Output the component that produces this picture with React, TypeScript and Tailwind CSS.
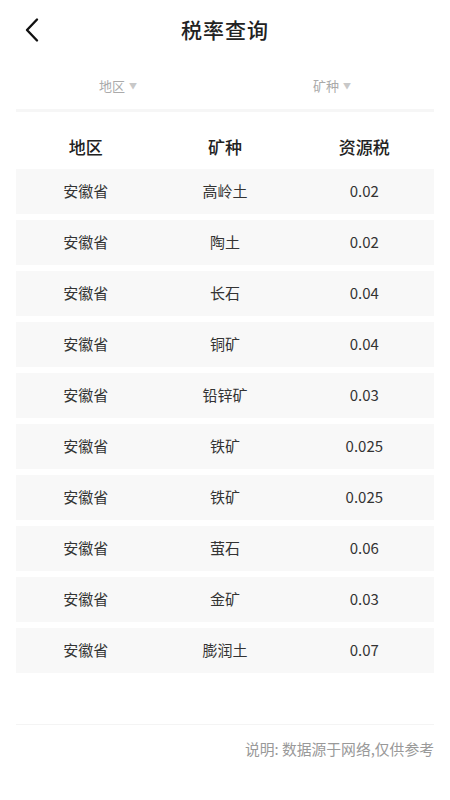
const rows = [
  { region: "安徽省", mineral: "高岭土", tax: "0.02" },
  { region: "安徽省", mineral: "陶土", tax: "0.02" },
  { region: "安徽省", mineral: "长石", tax: "0.04" },
  { region: "安徽省", mineral: "铜矿", tax: "0.04" },
  { region: "安徽省", mineral: "铅锌矿", tax: "0.03" },
  { region: "安徽省", mineral: "铁矿", tax: "0.025" },
  { region: "安徽省", mineral: "铁矿", tax: "0.025" },
  { region: "安徽省", mineral: "萤石", tax: "0.06" },
  { region: "安徽省", mineral: "金矿", tax: "0.03" },
  { region: "安徽省", mineral: "膨润土", tax: "0.07" },
];

const font = { fontFamily: '"Noto Sans CJK SC", "Noto Sans", sans-serif' };

export default function App() {
  return (
    <div className="w-[450px] h-[800px] bg-white text-[#222]" style={font}>
      {/* Top bar */}
      <div className="relative h-[60px] flex items-center justify-center">
        <button className="absolute left-[22px] top-[16px]">
          <svg width="20" height="28" viewBox="0 0 20 28" fill="none">
            <polyline
              points="15,3.5 5,14 15,24.5"
              stroke="#111"
              strokeWidth="2.4"
              strokeLinecap="round"
              strokeLinejoin="round"
            />
          </svg>
        </button>
        <h1 className="text-[21px] font-medium text-[#222] tracking-[1px]">税率查询</h1>
      </div>

      {/* Filters */}
      <div className="mx-4 h-[49px] pt-[2px] flex items-center text-[13px] text-[#aaa]">
        <div className="flex-1 flex items-center justify-center gap-[4px] pr-[10px]">
          <span>地区</span>
          <span className="text-[8px] text-[#c8c8c8]">▼</span>
        </div>
        <div className="flex-1 flex items-center justify-center gap-[4px]">
          <span>矿种</span>
          <span className="text-[8px] text-[#c8c8c8]">▼</span>
        </div>
      </div>
      <div className="mx-4 h-[3px] bg-[#f6f6f6]" />

      {/* Table header */}
      <div className="mx-4 h-[57px] pt-[12px] grid grid-cols-3 items-center text-center text-[17px] font-medium text-[#222]">
        <span>地区</span>
        <span>矿种</span>
        <span>资源税</span>
      </div>

      {/* Rows */}
      <div className="mx-4 flex flex-col gap-[6.5px]">
        {rows.map((r, i) => (
          <div
            key={i}
            className="h-[44.5px] grid grid-cols-3 items-center text-center text-[15px] text-[#333] bg-[#f8f8f8]"
          >
            <span>{r.region}</span>
            <span>{r.mineral}</span>
            <span>{r.tax}</span>
          </div>
        ))}
      </div>

      <div className="mx-4 mt-[51px] h-px bg-[#f4f4f4]" />
      <div className="mx-4 mt-[13px] text-right text-[14.8px] text-[#999]">
        说明: 数据源于网络,仅供参考
      </div>
    </div>
  );
}
